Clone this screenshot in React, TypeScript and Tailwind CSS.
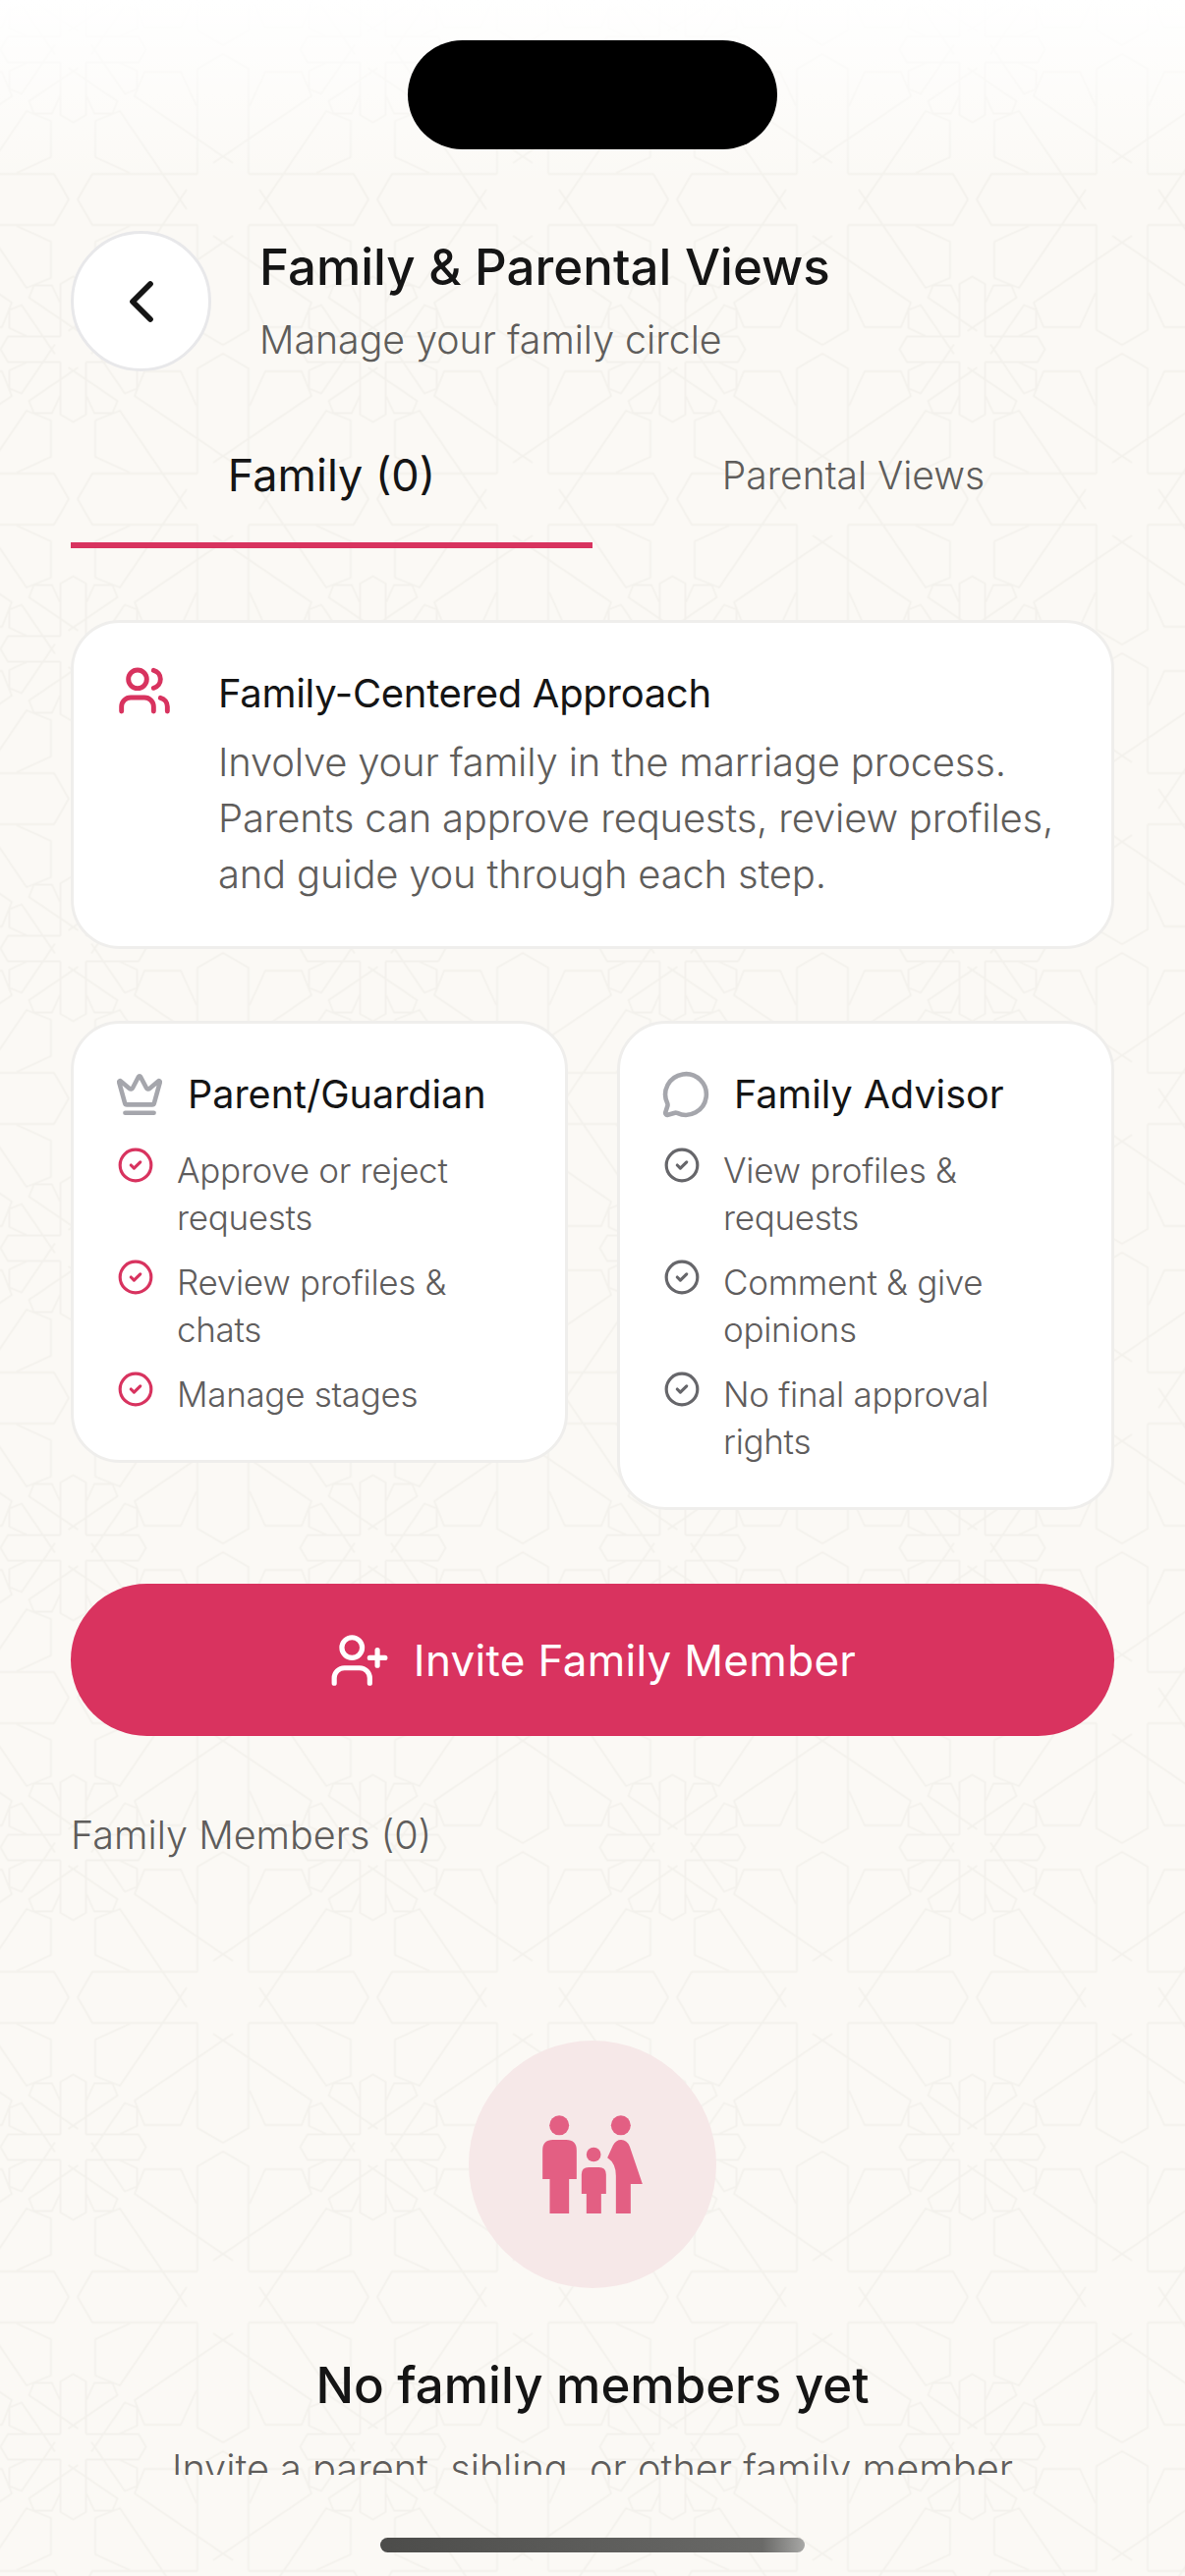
import { ChevronLeft, CircleCheck, Crown, MessageCircle, UserPlus, Users } from "lucide-react"
import type { ReactNode } from "react"

const armPath = "M-26 -26V-133L0 -148L26 -133V-26"
const starPath = "M10 -37L-90 -105L-80 -130H-43L-27 -95"
const starMirror = "M-10 -37L90 -105L80 -130H43L27 -95"

function Rosette({ x, y, scale }: { x: number; y: number; scale: number }) {
  return (
    <g transform={`translate(${x} ${y}) scale(${scale})`}>
      {[0, 90, 180, 270].map((angle) => (
        <g key={angle} transform={`rotate(${angle})`}>
          <path d={armPath} vectorEffect="non-scaling-stroke" />
          <path d={starPath} vectorEffect="non-scaling-stroke" />
          <path d={starMirror} vectorEffect="non-scaling-stroke" />
        </g>
      ))}
    </g>
  )
}

function Backdrop() {
  return (
    <svg className="absolute inset-0 h-full w-full" aria-hidden="true">
      <defs>
        <pattern id="tile" x="74.5" y="1880.5" width="305" height="305" patternUnits="userSpaceOnUse">
          <g fill="none" stroke="#f3f1ec" strokeWidth="1.8" strokeLinejoin="round">
            <Rosette x={152.5} y={152.5} scale={1} />
            <Rosette x={0} y={0} scale={0.5} />
            <Rosette x={305} y={0} scale={0.5} />
            <Rosette x={0} y={305} scale={0.5} />
            <Rosette x={305} y={305} scale={0.5} />
          </g>
        </pattern>
      </defs>
      <rect width="100%" height="100%" fill="url(#tile)" />
    </svg>
  )
}

function FamilyIcon() {
  return (
    <svg viewBox="340 305 305 300" className="h-[100px] w-[102px]" fill="#e35f83" aria-hidden="true">
      <circle cx="391" cy="336" r="30" />
      <path d="M340 500V412Q340 380 372 380H412Q444 380 444 412V500H421V605H362V500Z" />
      <circle cx="496" cy="425" r="22" />
      <path d="M459 545V486Q459 464 481 464H512Q534 464 534 486V545H519V605H474V545Z" />
      <circle cx="579" cy="336" r="30" />
      <path d="M564 605V490Q564 452 538 435L555 397Q564 380 580 380Q597 380 606 400L645 515H609V605Z" />
    </svg>
  )
}

function Permission({ text, tone }: { text: string; tone: string }) {
  return (
    <li className="flex items-start gap-[23px]">
      <span className={`ml-[2px] shrink-0 ${tone}`}>
        <CircleCheck className="h-[38px] w-[38px]" strokeWidth={2} />
      </span>
      <span className="text-[35px] font-light leading-[48px] tracking-[-0.3px] text-[#5f5d5d]">{text}</span>
    </li>
  )
}

function RoleCard({ icon, title, tone, items }: { icon: ReactNode; title: string; tone: string; items: string[] }) {
  return (
    <div className="flex-1 rounded-[50px] border-[3px] border-[#efeeec] bg-white pb-[43px] pl-[42px] pr-[30px] pt-[45px]">
      <div className="flex h-[54px] items-center gap-[24px]">
        {icon}
        <h3 className="text-[39.5px] leading-[54px] text-[#151515]">{title}</h3>
      </div>
      <ul className="mt-[26px] flex flex-col gap-[18px]">
        {items.map((item) => (
          <Permission key={item} text={item} tone={tone} />
        ))}
      </ul>
    </div>
  )
}

export default function App() {
  return (
    <div className="relative h-[2622px] w-[1206px] overflow-hidden bg-[#fbf9f5] font-[Inter,sans-serif]">
      <Backdrop />
      <div className="absolute inset-x-0 top-0 h-[190px] bg-gradient-to-b from-white to-transparent" />
      <div className="absolute left-[415px] top-[41px] h-[111px] w-[376px] rounded-full bg-black" />

      <main className="relative flex h-[2519px] flex-col overflow-hidden px-[72px] pt-[235px]">
        <header className="flex items-start gap-[49px]">
          <button className="flex h-[143px] w-[143px] shrink-0 items-center justify-center rounded-full border-[3px] border-[#e8e8ea] bg-white">
            <ChevronLeft className="h-[72px] w-[72px] text-[#151515]" strokeWidth={1.9} />
          </button>
          <div className="pt-[5px]">
            <h1 className="text-[51px] font-medium leading-[64px] text-[#151515]">Family &amp; Parental Views</h1>
            <p className="mt-[14px] text-[39.3px] font-light leading-[56px] text-[#5f5d5b]">Manage your family circle</p>
          </div>
        </header>

        <nav className="mt-[76px] flex">
          <div className="flex-1 border-b-[6px] border-[#d8335f] pb-[38px] text-center text-[45px] leading-[60px] text-[#151515]">
            Family (0)
          </div>
          <div className="flex-1 pb-[44px] text-center text-[39px] font-light leading-[60px] text-[#5f5d5b]">Parental Views</div>
        </nav>

        <section className="mt-[73px] flex gap-[47px] rounded-[50px] border-[3px] border-[#efeeec] bg-white pb-[45px] pl-[44px] pr-[20px] pt-[46px]">
          <Users className="mt-[-5px] h-[56px] w-[56px] shrink-0 text-[#d8335f]" strokeWidth={2.1} />
          <div>
            <h2 className="text-[40px] leading-[52px] tracking-[-0.3px] text-[#151515]">Family-Centered Approach</h2>
            <p className="mt-[15px] text-[40px] font-light leading-[57px] tracking-[-0.2px] text-[#5f5d5b]">
              Involve your family in the marriage process. Parents can approve requests, review profiles, and guide you through each step.
            </p>
          </div>
        </section>

        <div className="mt-[73px] flex items-start gap-[50px]">
          <RoleCard
            icon={<Crown className="h-[50px] w-[50px] text-[#a5a6ac]" strokeWidth={2.2} />}
            title="Parent/Guardian"
            tone="text-[#d8335f]"
            items={["Approve or reject requests", "Review profiles & chats", "Manage stages"]}
          />
          <RoleCard
            icon={<MessageCircle className="h-[50px] w-[50px] text-[#a5a6ac]" strokeWidth={2.2} />}
            title="Family Advisor"
            tone="text-[#66666a]"
            items={["View profiles & requests", "Comment & give opinions", "No final approval rights"]}
          />
        </div>

        <button className="mt-[75px] flex h-[155px] w-full shrink-0 items-center justify-center gap-[24px] rounded-full bg-[#d9335f] text-[44px] tracking-[0.3px] text-white">
          <UserPlus className="h-[62px] w-[62px]" strokeWidth={2} />
          Invite Family Member
        </button>

        <h2 className="mt-[73px] text-[39.5px] font-light leading-[56px] text-[#5f5d5b]">Family Members (0)</h2>

        <div className="mx-auto mt-[181px] flex h-[252px] w-[252px] shrink-0 items-center justify-center rounded-full bg-[#f6e8e8]">
          <FamilyIcon />
        </div>

        <h2 className="mt-[67px] text-center text-[51px] font-medium leading-[64px] text-[#151515]">No family members yet</h2>
        <p className="mt-[25px] text-center text-[39.7px] font-light leading-[56px] text-[#5f5d5b]">
          Invite a parent, sibling, or other family member
        </p>
      </main>

      <div className="absolute left-[387px] top-[2583px] h-[15px] w-[432px] rounded-full bg-gradient-to-r from-[#4c4c4a] via-[#6a6a68] via-90% to-[#a8a8a6]" />
    </div>
  )
}
